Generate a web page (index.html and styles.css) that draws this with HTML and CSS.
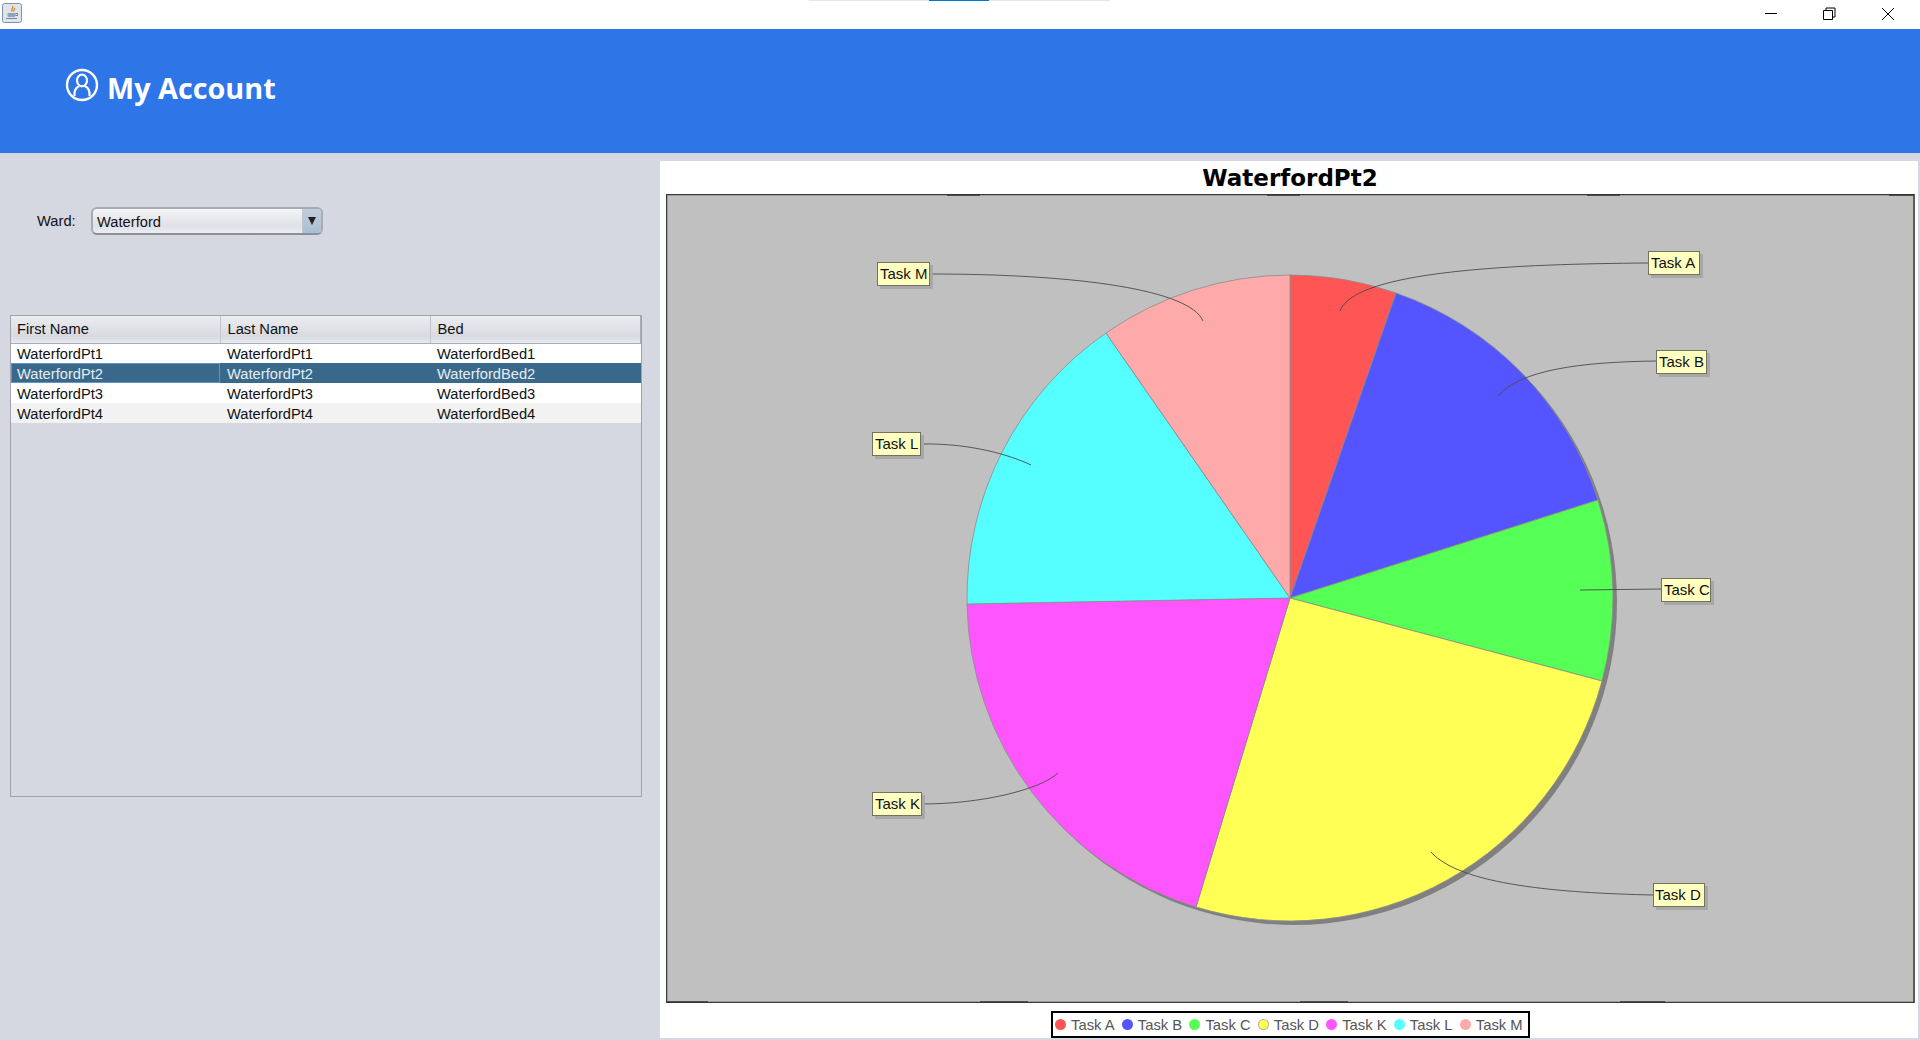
FILE: index.html
```html
<!DOCTYPE html>
<html lang="en">
<head>
  <meta charset="UTF-8" />
  <meta name="viewport" content="width=device-width, initial-scale=1.0" />
  <title>My Account</title>
  <link rel="stylesheet" href="styles.css">
</head>
<body>
  <div class="titlebar">
    <svg class="app-icon" width="20" height="20" viewBox="0 0 20 20">
      <rect x="0.5" y="0.5" width="19" height="19" rx="2" fill="#dfe4ea" stroke="#7d92a8" />
      <path d="M10.500 3c1.500 2-2 3-.5 5.500M12.500 5c.5 1.500-1.500 2-.5 3.500" fill="none" stroke="#e8842c" stroke-width="1.400" />
      <path d="M5.500 10h8v2.500c0 1-1 1.500-2 1.500h-4c-1 0-2-.5-2-1.500z" fill="#8da3b8" />
      <path d="M13.500 10.500h2v2h-2M4 15.500h11" fill="none" stroke="#6f879e" />
    </svg>
    <div class="tab-line"><span class="tab-active"></span></div>
    <div class="win-buttons">
      <svg width="58" height="29" viewBox="0 0 58 29"><path d="M22 13.500h12" stroke="#000" fill="none" /></svg>
      <svg width="58" height="29" viewBox="0 0 58 29"><path d="M22.500 10.500h9v9h-9zM25 10.500v-2.500h9v9h-2.500" stroke="#000" fill="none" /></svg>
      <svg width="58" height="29" viewBox="0 0 58 29"><path d="M23 8l12 12M35 8l-12 12" stroke="#000" fill="none" /></svg>
    </div>
  </div>

  <header class="banner">
    <svg class="user-icon" width="34" height="34" viewBox="0 0 34 34">
      <circle cx="17" cy="17" r="15" fill="none" stroke="#fff" stroke-width="2.400" />
      <ellipse cx="17" cy="12.500" rx="5" ry="5.800" fill="none" stroke="#fff" stroke-width="2.200" />
      <path d="M9.500 28v-3c0-4 3-6.500 5-7M24.500 28v-3c0-4-3-6.500-5-7" fill="none" stroke="#fff" stroke-width="2.200" />
    </svg>
    <h1>My Account</h1>
  </header>

  <main class="content">
    <section class="left-panel">
      <div class="ward-row">
        <label class="ward-label">Ward:</label>
        <div class="combo">
          <span class="combo-value">Waterford</span>
          <span class="combo-arrow"><i></i></span>
        </div>
      </div>

      <div class="table-box">
        <table class="patients">
          <colgroup><col class="col-first"><col class="col-last"><col></colgroup>
          <thead>
            <tr><th>First Name</th><th>Last Name</th><th>Bed</th></tr>
          </thead>
          <tbody>
            <tr><td>WaterfordPt1</td><td>WaterfordPt1</td><td>WaterfordBed1</td></tr>
            <tr class="selected"><td class="focused">WaterfordPt2</td><td>WaterfordPt2</td><td>WaterfordBed2</td></tr>
            <tr><td>WaterfordPt3</td><td>WaterfordPt3</td><td>WaterfordBed3</td></tr>
            <tr class="alt"><td>WaterfordPt4</td><td>WaterfordPt4</td><td>WaterfordBed4</td></tr>
          </tbody>
        </table>
      </div>
    </section>

    <section class="chart-panel">
      <h2 class="chart-title">WaterfordPt2</h2>
      <svg class="plot" width="1249" height="809" viewBox="666 194 1249 809">
        <rect x="666" y="194" width="1249" height="809" fill="#c0c0c0" />

        <!-- pie, coordinates are page pixels -->
        <circle cx="1294" cy="602" r="323" fill="#808080" />
        <g stroke="#8c8c8c" stroke-width="1" stroke-opacity="0.8">
          <path d="M1290 598L1290 275A323 323 0 0 1 1396 293Z" fill="#ff5555" />
          <path d="M1290 598L1396 293A323 323 0 0 1 1598 500Z" fill="#5555ff" />
          <path d="M1290 598L1598 500A323 323 0 0 1 1602 681Z" fill="#55ff55" />
          <path d="M1290 598L1602 681A323 323 0 0 1 1196 907Z" fill="#ffff55" />
          <path d="M1290 598L1196 907A323 323 0 0 1 967 604Z" fill="#ff55ff" />
          <path d="M1290 598L967 604A323 323 0 0 1 1106 333Z" fill="#55ffff" />
          <path d="M1290 598L1106 333A323 323 0 0 1 1290 275Z" fill="#ffaaaa" />
        </g>

        <!-- leader lines -->
        <g fill="none" stroke="#4a4a4a" stroke-width="0.900">
          <path d="M1648 263C1520 264 1355 270 1340 311" />
          <path d="M1656 361C1580 362 1520 370 1498 396" />
          <path d="M1661 589L1580 590" />
          <path d="M1653 895C1560 893 1460 885 1431 852" />
          <path d="M922 804C980 804 1040 790 1058 773" />
          <path d="M921 444C970 443 1010 455 1031 465" />
          <path d="M930 274C1080 274 1190 290 1203 321" />
        </g>

        <!-- labels -->
        <g class="pie-label"><rect class="lbl-shadow" x="1651" y="254" width="52" height="24" /><rect class="lbl-box" x="1648.500" y="251.500" width="51" height="23" /><text x="1651" y="268">Task A</text></g>
        <g class="pie-label"><rect class="lbl-shadow" x="1659" y="353" width="51" height="24" /><rect class="lbl-box" x="1656.500" y="350.500" width="50" height="23" /><text x="1659" y="367">Task B</text></g>
        <g class="pie-label"><rect class="lbl-shadow" x="1664" y="581" width="50" height="24" /><rect class="lbl-box" x="1661.500" y="578.500" width="49" height="23" /><text x="1664" y="595">Task C</text></g>
        <g class="pie-label"><rect class="lbl-shadow" x="1656" y="886" width="52" height="24" /><rect class="lbl-box" x="1653.500" y="883.500" width="51" height="23" /><text x="1655" y="900">Task D</text></g>
        <g class="pie-label"><rect class="lbl-shadow" x="875" y="795" width="50" height="24" /><rect class="lbl-box" x="872.500" y="792.500" width="49" height="23" /><text x="875" y="809">Task K</text></g>
        <g class="pie-label"><rect class="lbl-shadow" x="875" y="435" width="49" height="24" /><rect class="lbl-box" x="872.500" y="432.500" width="48" height="23" /><text x="875" y="449">Task L</text></g>
        <g class="pie-label"><rect class="lbl-shadow" x="880" y="265" width="53" height="24" /><rect class="lbl-box" x="877.500" y="262.500" width="52" height="23" /><text x="880" y="279">Task M</text></g>

        <!-- plot outline and the darker stubs on it -->
        <rect x="666.500" y="194.500" width="1247.500" height="808" fill="none" stroke="#3a3a3a" stroke-width="1.500" />
        <path d="M947 194.500h33M1267 194.500h33M1587 194.500h33M1889 194.500h25M667 1002.500h41M980 1002.500h48M1300 1002.500h48M1620 1002.500h45" stroke="#333" stroke-width="2.500" fill="none" />
      </svg>
      <div class="legend">
        <span class="legend-item"><i class="dot dot-a"></i>Task A</span>
        <span class="legend-item"><i class="dot dot-b"></i>Task B</span>
        <span class="legend-item"><i class="dot dot-c"></i>Task C</span>
        <span class="legend-item"><i class="dot dot-d"></i>Task D</span>
        <span class="legend-item"><i class="dot dot-k"></i>Task K</span>
        <span class="legend-item"><i class="dot dot-l"></i>Task L</span>
        <span class="legend-item"><i class="dot dot-m"></i>Task M</span>
      </div>
    </section>
  </main>
</body>
</html>
```

FILE: styles.css
```css
html, body { margin: 0; padding: 0; height: 1040px; overflow: hidden; }
body { display: flex; flex-direction: column; background: #d5d8e1; color: #111; font-family: "Liberation Sans", Arial, sans-serif; font-size: 14.7px; }

.titlebar { position: relative; flex: none; height: 29px; background: #fff; display: flex; align-items: flex-start; justify-content: space-between; }
.app-icon { margin: 3px 0 0 2px; }
.tab-line { position: absolute; top: 0; left: 809px; width: 301px; height: 1px; background: #e6e6e6; }
.tab-active { position: absolute; left: 120px; width: 60px; height: 1px; background: #0078d7; }
.win-buttons { display: flex; padding-right: 3px; }

.banner { flex: none; height: 124px; background: #2e76e8; display: flex; align-items: center; padding: 0 0 7px 65px; box-sizing: border-box; }
.user-icon { margin-right: 8px; margin-top: -5px; }
.banner h1 { margin: 0; color: #fff; font-family: "Open Sans", sans-serif; font-size: 28.800px; font-weight: 700; }

.content { flex: 1; display: flex; min-height: 0; }

.left-panel { flex: none; width: 660px; }
.ward-row { display: flex; align-items: center; margin-top: 54px; padding-left: 37px; }
.ward-label { width: 54px; }
.combo { width: 232px; height: 28px; box-sizing: border-box; display: flex; justify-content: space-between; border: 2px solid #a8abb3; border-bottom-color: #8b8f98; border-radius: 6px; background: linear-gradient(#f3f4f6, #dfe1e7 70%, #ecedf2); overflow: hidden; }
.combo-value { padding-left: 4px; line-height: 26px; }
.combo-arrow { width: 18px; display: flex; align-items: center; justify-content: center; background: linear-gradient(#c3cdda, #a9bfd4); border-left: 1px solid #c2c8d2; }
.combo-arrow i { border-left: 4px solid transparent; border-right: 4px solid transparent; border-top: 8px solid #222; }

.table-box { margin: 80px 0 0 10px; width: 632px; height: 482px; box-sizing: border-box; border: 1px solid #a0a3ad; }
.patients { width: 100%; table-layout: fixed; border-collapse: collapse; }
.col-first { width: 209px; }
.col-last { width: 210px; }
.patients th { height: 27px; padding: 0 0 0 7px; box-sizing: border-box; text-align: left; font-weight: normal; background: linear-gradient(#ecedf1, #d8dae0 75%, #e6e8f3); border-right: 1px solid #c2c5cd; border-bottom: 1px solid #a9acb6; }
.patients th:last-child { border-right-color: #a9acb6; }
.patients td { height: 20px; padding: 1px 0 0 7px; box-sizing: border-box; background: #fff; line-height: 18px; }
.patients th:first-child, .patients td:first-child { padding-left: 6px; }
.patients .alt td { background: #f2f2f2; }
.patients .selected td { background: #39698a; color: #e6edf3; }
.patients .selected .focused { box-shadow: inset 0 0 0 1px #6295c2; }

.chart-panel { flex: none; width: 1258px; height: 877px; margin-top: 8px; background: #fff; display: flex; flex-direction: column; align-items: flex-start; }
.chart-title { margin: 0; width: 1260px; height: 33px; text-align: center; line-height: 35px; font-family: "DejaVu Sans", sans-serif; font-size: 23px; font-weight: 700; color: #000; }
.plot { display: block; margin-left: 6px; }
.pie-label text { font-family: "Liberation Sans", sans-serif; font-size: 15px; fill: #111; }
.lbl-shadow { fill: #a8a8a8; }
.lbl-box { fill: #ffffc0; stroke: #72725f; stroke-width: 1; }

.legend { margin: 8px 0 0 391px; height: 27px; box-sizing: border-box; border: 2px solid #000; padding: 0 5px 0 2px; display: flex; align-items: center; gap: 7.200px; font-size: 14.800px; color: #555; white-space: nowrap; }
.legend-item { display: flex; align-items: center; gap: 5px; }
.dot { width: 11px; height: 11px; border-radius: 50%; }
.dot-a { background: #ff5555; }
.dot-b { background: #5555ff; }
.dot-c { background: #55ff55; }
.dot-d { background: #ffff55; box-shadow: 0 0 0 1px #b8b8a0 inset; }
.dot-k { background: #ff55ff; }
.dot-l { background: #55ffff; }
.dot-m { background: #ffaaaa; }
```
